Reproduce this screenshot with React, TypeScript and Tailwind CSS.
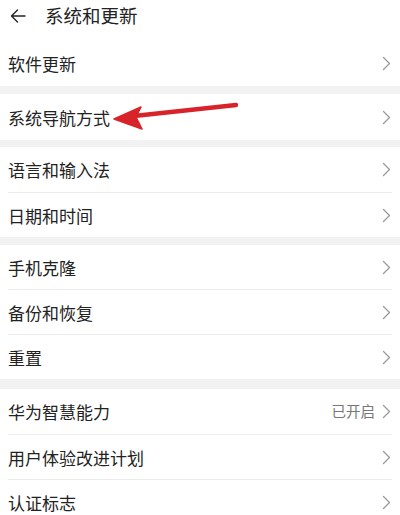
import React from "react";

interface Row {
  label: string;
  value?: string;
}

const GROUPS: { rows: Row[]; rowH: string }[] = [
  { rows: [{ label: "系统导航方式" }], rowH: "h-[46px]" },
  { rows: [{ label: "语言和输入法" }, { label: "日期和时间" }], rowH: "h-[45px]" },
  { rows: [{ label: "手机克隆" }, { label: "备份和恢复" }, { label: "重置" }], rowH: "h-[44px]" },
  {
    rows: [{ label: "华为智慧能力", value: "已开启" }, { label: "用户体验改进计划" }, { label: "认证标志" }],
    rowH: "h-[45px]",
  },
];

const BANDS = ["h-[8px]", "h-[7px]", "h-[8px]", "h-[10px]"];

function Chevron() {
  return (
    <svg width="9" height="15" viewBox="0 0 9 15" fill="none" className="shrink-0">
      <path d="M1.5 1.5 L7.5 7.5 L1.5 13.5" stroke="#9a9a9a" strokeWidth="1.3" strokeLinecap="round" strokeLinejoin="round" />
    </svg>
  );
}

function ListRow({ row, h }: { row: Row; h: string }) {
  return (
    <div className={`flex ${h} items-center justify-between pl-[8px] pr-[9px]`}>
      <span className="text-[17px] leading-none text-[#222]">{row.label}</span>
      <div className="flex items-center gap-[7px]">
        {row.value && <span className="text-[14.5px] leading-none text-[#777]">{row.value}</span>}
        <Chevron />
      </div>
    </div>
  );
}

export default function App() {
  return (
    <main
      className="relative h-[515px] w-[400px] overflow-hidden bg-white"
      style={{ fontFamily: '"Noto Sans CJK SC", "Noto Sans", sans-serif' }}
    >
      {/* header */}
      <div className="flex h-[41px] items-center pb-[10px] pl-[10px]">
        <svg width="16" height="16" viewBox="0 0 16 16" fill="none">
          <path d="M15 8 H1.5 M7.5 2 L1.5 8 L7.5 14" stroke="#222" strokeWidth="1.4" strokeLinecap="round" strokeLinejoin="round" />
        </svg>
        <span className="ml-[19px] text-[18.5px] leading-none text-[#222]">系统和更新</span>
      </div>

      <ListRow row={{ label: "软件更新" }} h="h-[45px]" />

      {GROUPS.map((g, gi) => (
        <div key={gi}>
          <div className={`${BANDS[gi]} bg-[#f2f2f2]`} />
          {g.rows.map((r, ri) => (
            <div key={r.label}>
              {ri > 0 && <div className="mx-[8px] h-px bg-[#ebebeb]" />}
              <ListRow row={r} h={ri > 0 ? "h-[44px]" : g.rowH} />
            </div>
          ))}
        </div>
      ))}

      {/* red annotation arrow */}
      <svg className="pointer-events-none absolute left-0 top-0" width="400" height="515" viewBox="0 0 400 515">
        <path d="M236 105 L134 116" stroke="#d8232a" strokeWidth="4.5" strokeLinecap="round" />
        <path d="M114 119 L141 107 L136 117 L142 129 Z" fill="#d8232a" stroke="#d8232a" strokeWidth="1.5" strokeLinejoin="round" />
      </svg>
    </main>
  );
}
